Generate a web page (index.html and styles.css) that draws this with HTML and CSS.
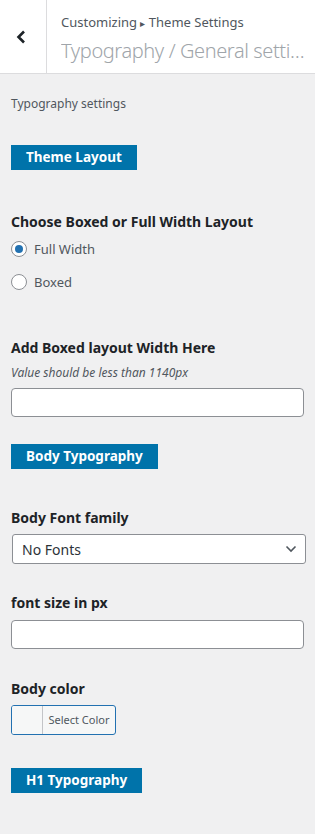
FILE: index.html
```html
<!DOCTYPE html>
<html lang="en">
<head>
	<meta charset="UTF-8" />
	<meta name="viewport" content="width=device-width, initial-scale=1.0" />
	<title>Customizer - Typography</title>
	<link rel="stylesheet" href="styles.css">
</head>
<body>
	<header class="section-head">
		<button class="back-btn" aria-label="Back">
			<svg width="12" height="14" viewBox="0 0 12 14"><path d="M9 1.5 L3.5 7 L9 12.5" fill="none" stroke="#1d2327" stroke-width="2.6"/></svg>
		</button>
		<div class="head-title">
			<span class="crumb">Customizing <span class="arrow">&#9656;</span> Theme Settings</span>
			<h3>Typography / General settings</h3>
		</div>
	</header>

	<div class="controls">
		<p class="section-desc">Typography settings</p>

		<div class="group-title first">Theme Layout</div>

		<div class="control radio-control">
			<span class="control-title">Choose Boxed or Full Width Layout</span>
			<label class="radio-row"><input type="radio" name="layout" checked> Full Width</label>
			<label class="radio-row"><input type="radio" name="layout"> Boxed</label>
		</div>

		<div class="control width-control">
			<span class="control-title">Add Boxed layout Width Here</span>
			<span class="description">Value should be less than 1140px</span>
			<input type="text" class="text-input">
		</div>

		<div class="group-title body-group">Body Typography</div>

		<div class="control font-control">
			<span class="control-title">Body Font family</span>
			<div class="select-box">
				<span>No Fonts</span>
				<svg width="12" height="8" viewBox="0 0 12 8"><path d="M1.5 1.5 L6 6 L10.5 1.5" fill="none" stroke="#50575e" stroke-width="1.6"/></svg>
			</div>
		</div>

		<div class="control size-control">
			<span class="control-title">font size in px</span>
			<input type="text" class="text-input">
		</div>

		<div class="control color-control">
			<span class="control-title">Body color</span>
			<button class="color-btn"><span class="swatch"></span><span class="color-label">Select Color</span></button>
		</div>

		<div class="group-title last">H1 Typography</div>
	</div>
</body>
</html>
```

FILE: styles.css
```css
body {
	margin: 0;
	font-family: "Noto Sans", sans-serif;
	font-size: 13px;
	color: #50575e;
	background-color: #f0f0f1;
}
.section-head {
	display: flex;
	height: 73px;
	background-color: #fff;
	border-bottom: 1px solid #dcdcde;
}
.back-btn {
	width: 47px;
	padding: 0 4px 0 0;
	border: none;
	border-right: 1px solid #dcdcde;
	background: #fff;
	display: flex;
	align-items: center;
	justify-content: center;
}
.head-title {
	flex: 1;
	min-width: 0;
	padding: 13px 10px 0 14px;
}
.crumb {
	display: block;
	font-size: 13px;
	line-height: 18px;
	color: #50575e;
}
.crumb .arrow {
	font-size: 10px;
}
.head-title h3 {
	margin: 5px 0 0;
	font-size: 20px;
	font-weight: 300;
	line-height: 28px;
	letter-spacing: -0.4px;
	color: #a0a5aa;
	white-space: nowrap;
	overflow: hidden;
	text-overflow: ellipsis;
}
.controls {
	padding: 22px 11px 40px 11px;
}
.section-desc {
	margin: 0;
	font-size: 12px;
	line-height: 16px;
	color: #50575e;
}
.group-title {
	width: fit-content;
	padding: 0 15px;
	height: 25px;
	line-height: 25px;
	background-color: #0073aa;
	color: #fff;
	font-size: 13.5px;
	font-weight: 700;
}
.group-title.first {
	margin-top: 33px;
}
.group-title.body-group {
	margin-top: 27px;
}
.group-title.last {
	margin-top: 33px;
}
.control {
	display: flex;
	flex-direction: column;
}
.control-title {
	font-size: 14px;
	font-weight: 700;
	line-height: 20px;
	color: #1d2327;
	margin-bottom: 6px;
}
.radio-control {
	margin-top: 42px;
	gap: 11px;
}
.radio-control .control-title {
	margin-bottom: -5px;
}
.radio-row {
	display: flex;
	align-items: center;
	height: 22px;
	font-size: 13px;
	color: #50575e;
}
.radio-row input {
	appearance: none;
	width: 16px;
	height: 16px;
	margin: 0 7px 0 0;
	border: 1px solid #8c8f94;
	border-radius: 50%;
	background: #fff;
	display: grid;
	place-items: center;
}
.radio-row input:checked::before {
	content: "";
	width: 8px;
	height: 8px;
	border-radius: 50%;
	background: #2271b1;
}
.width-control {
	margin-top: 45px;
}
.width-control .control-title {
	margin-bottom: 7px;
}
.description {
	font-size: 12px;
	font-style: italic;
	line-height: 16px;
	margin-bottom: 7px;
	color: #50575e;
}
.text-input {
	box-sizing: border-box;
	width: 100%;
	height: 29px;
	margin: 0;
	border: 1px solid #8c8f94;
	border-radius: 4px;
	background: #fff;
}
.font-control {
	margin-top: 39px;
}
.select-box {
	box-sizing: border-box;
	height: 30px;
	margin-left: 1px;
	margin-right: -2px;
	padding: 0 8px 0 9px;
	border: 1px solid #8c8f94;
	border-radius: 3px;
	background: #fff;
	display: flex;
	align-items: center;
	justify-content: space-between;
	font-size: 14px;
	color: #2c3338;
}
.size-control {
	margin-top: 29px;
}
.size-control .control-title {
	margin-bottom: 7px;
}
.color-control {
	margin-top: 30px;
	align-items: flex-start;
}
.color-btn {
	display: flex;
	height: 30px;
	width: 105px;
	padding: 0;
	border: 1px solid #2271b1;
	border-radius: 3px;
	background: #f6f7f7;
	overflow: hidden;
}
.swatch {
	width: 30px;
	height: 100%;
	border-right: 1px solid #c3c4c7;
	background: #f6f7f7;
}
.color-label {
	flex: 1;
	line-height: 28px;
	font-size: 11px;
	color: #50575e;
	font-family: "Noto Sans", sans-serif;
}
```
